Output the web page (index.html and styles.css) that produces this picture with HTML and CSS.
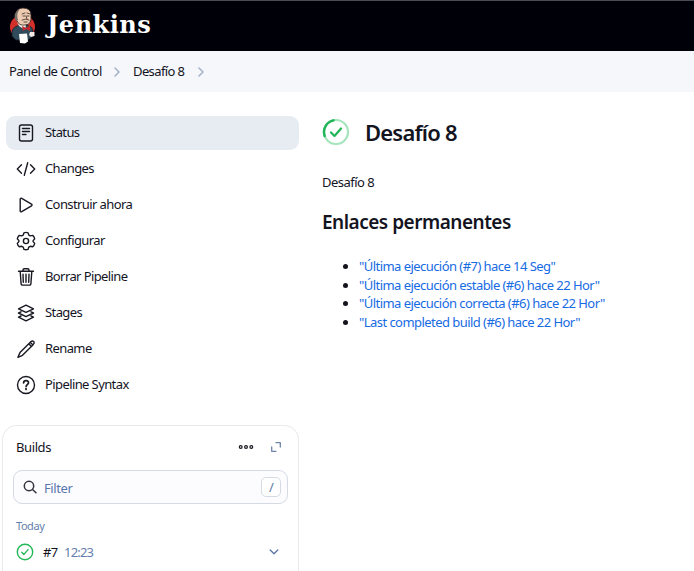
FILE: index.html
```html
<!DOCTYPE html>
<html lang="es">
<head>
<meta charset="utf-8">
<title>Desafío 8 - Jenkins</title>
<link rel="stylesheet" href="styles.css">
</head>
<body>
<header class="header">
  <svg class="butler" width="28" height="38" viewBox="0 0 28 38">
    <ellipse cx="13.500" cy="20" rx="12.500" ry="12" fill="#d3302b"/>
    <path d="M3 29 Q2 21 8 19 L13 17 L20 19 Q25 20 24 29 L19 33 L7 33Z" fill="#304b5b" stroke="#14212b" stroke-width=".8"/>
    <path d="M8 15 L17 18 L16 23 L10 19Z" fill="#f4eee8"/>
    <path d="M7 8 Q7 1 14 1 Q22 1 22 8 Q23 18 16 18 Q10 19 8 14Z" fill="#edcbb2" stroke="#30231f" stroke-width=".8"/>
    <path d="M7 14 Q4 9 7 5 Q9 2 11 2 Q7 6 9 13Z" fill="#756f68"/>
    <path d="M13 7l3-1m2 0l3 1M14 9h2m2 0h2M17 9l1 3M13 13q4-2 7 0M15 15h3" fill="none" stroke="#3b2924" stroke-width=".8"/>
    <path d="M13 19l4 2 4-3v6l-4-2-3 2z" fill="#c3252b"/>
    <path d="M10 27l8-.5 1 8-3 2-5-.5z" fill="#fff"/>
    <path d="M21 25h4.500v4l-3.500 1-2-2z" fill="#f2e9e4"/>
  </svg>
  <span class="brand">Jenkins</span>
</header>
<nav class="crumbs">
  <span class="crumb-root">Panel de Control</span>
  <svg class="chev" width="6" height="10" viewBox="0 0 6 10"><path d="M1 1l4 4-4 4"/></svg>
  <span class="crumb-job">Desafío 8</span>
  <svg class="chev" width="6" height="10" viewBox="0 0 6 10"><path d="M1 1l4 4-4 4"/></svg>
</nav>
<div class="page">
  <aside class="side">
    <ul class="tasks">
      <li class="task active"><svg class="ic" viewBox="0 0 20 20"><rect x="3.500" y="2" width="13" height="16" rx="2"/><path d="M6.500 5.500h7M6.500 8.500h7M6.500 11.500h3.500"/></svg><span>Status</span></li>
      <li class="task"><svg class="ic" viewBox="0 0 20 20"><path d="M5.500 5.800L1.300 10l4.200 4.200M14.500 5.800l4.200 4.200-4.200 4.200M11.700 3.800L8.300 16.200"/></svg><span>Changes</span></li>
      <li class="task"><svg class="ic" viewBox="0 0 20 20"><path d="M4.200 4.100v11.800c0 .8.800 1.200 1.500.8l9.800-5.900c.7-.4.700-1.200 0-1.600L5.700 3.300c-.7-.4-1.500 0-1.500.8z"/></svg><span>Construir ahora</span></li>
      <li class="task"><svg class="ic" viewBox="0 0 20 20"><path d="M8 1.800Q10 1 12 1.800l.8 2.300 1.500.8 2.400-.5Q18.300 5.800 18.700 7.800l-1.600 1.800v1l1.600 1.800Q18.300 14.400 16.700 15.800l-2.400-.5-1.500.8-.8 2.300Q10 19 8 18.400l-.8-2.300-1.500-.8-2.400.5Q1.700 14.400 1.300 12.400l1.600-1.800v-1L1.300 7.800Q1.700 5.800 3.300 4.400l2.400.5 1.500-.8z"/><circle cx="10" cy="10" r="2.600"/></svg><span>Configurar</span></li>
      <li class="task"><svg class="ic" viewBox="0 0 20 20"><path d="M2.500 4.300h15M4.200 4.500l.9 12.300c.1.800.6 1.300 1.400 1.300h7c.8 0 1.300-.5 1.400-1.300l.9-12.300M7 4V3c0-.7.500-1.200 1.200-1.200h3.600c.7 0 1.200.5 1.200 1.200v1M10 7.200v8M7 7.200l.3 8M13 7.200l-.3 8"/></svg><span>Borrar Pipeline</span></li>
      <li class="task"><svg class="ic" viewBox="0 0 20 20"><path d="M10 2.200l7.500 3.600L10 9.400 2.500 5.800zM5 8.800L2.500 10l7.500 3.600 7.500-3.600L15 8.800M5 13l-2.500 1.200 7.500 3.600 7.500-3.600L15 13"/></svg><span>Stages</span></li>
      <li class="task"><svg class="ic" viewBox="0 0 20 20"><path d="M14.300 3.300L4 13.600l-2.100 4.700 4.600-2L16.900 6M14.300 3.300l.7-.7c.8-.8 1.900-.8 2.600-.1s.7 1.800-.1 2.600l-.8.800zM12.800 4.800l2.600 2.600"/></svg><span>Rename</span></li>
      <li class="task"><svg class="ic" viewBox="0 0 20 20"><circle cx="10" cy="10" r="8.500"/><path class="bold" d="M7.600 7.900c.1-3.200 5.100-2.900 4.900 0-.1 1.500-2.400 1.900-2.400 3.500M10 13.600v.9"/></svg><span>Pipeline Syntax</span></li>
    </ul>
    <section class="builds">
      <div class="builds-head">
        <span class="builds-title">Builds</span>
        <svg class="dots" width="16" height="6" viewBox="0 0 16 6"><circle cx="2.700" cy="3" r="1.400"/><circle cx="8" cy="3" r="1.400"/><circle cx="13.300" cy="3" r="1.400"/></svg>
        <svg class="expand" width="10" height="10" viewBox="0 0 10 10"><path d="M5 .7h4.300V5M.7 5v4.300H5"/></svg>
      </div>
      <div class="filter">
        <svg class="search" width="14" height="14" viewBox="0 0 14 14"><circle cx="6" cy="6" r="4.700"/><path d="M9.500 9.500l3.500 3.300"/></svg>
        <span class="filter-text">Filter</span>
        <kbd class="key">/</kbd>
      </div>
      <div class="day">Today</div>
      <div class="build">
        <svg class="ok" width="18" height="18" viewBox="0 0 18 18"><circle cx="9" cy="9" r="7.700"/><path d="M5.800 9.300l2.100 2.100 4.200-4.800"/></svg>
        <span class="num">#7</span><span class="time">12:23</span>
        <svg class="down" width="10" height="6" viewBox="0 0 10 6"><path d="M1.200 1L5 4.700 8.800 1"/></svg>
      </div>
    </section>
  </aside>
  <main class="main">
    <div class="title-row">
      <svg width="28" height="28" viewBox="0 0 28 28" class="status"><circle cx="14" cy="14" r="12" class="ring"/><path class="arc" d="M2.700 18A12 12 0 0 1 11.500 2.300"/><path class="tick" d="M9 14.500l3.500 3.500 6.500-7.500"/></svg>
      <h1>Desafío 8</h1>
    </div>
    <p class="desc">Desafío 8</p>
    <h2>Enlaces permanentes</h2>
    <ul class="links">
      <li><a>"Última ejecución (#7) hace 14 Seg"</a></li>
      <li><a>"Última ejecución estable (#6) hace 22 Hor"</a></li>
      <li><a>"Última ejecución correcta (#6) hace 22 Hor"</a></li>
      <li><a>"Last completed build (#6) hace 22 Hor"</a></li>
    </ul>
  </main>
</div>
</body>
</html>
```
FILE: styles.css
```css
* { box-sizing: border-box; }
body { margin: 0; height: 571px; overflow: hidden; background: #fff; color: #14141f; font: 13px/18px "Noto Sans", "Open Sans", sans-serif; letter-spacing: -0.6px; }
svg { display: block; flex: none; fill: none; stroke-linecap: round; stroke-linejoin: round; }
ul { margin: 0; padding: 0; }
.header { height: 51px; background: #000009; border-top: 1px solid #4b4b50; display: flex; align-items: flex-start; padding: 6px 0 0 9px; }
.brand { margin: 3px 0 0 10px; color: #fff; font: bold 24px/30px "DejaVu Serif", serif; letter-spacing: 0.5px; }
.crumbs { height: 41px; background: #f5f7fa; display: flex; align-items: center; padding-left: 9px; }
.crumb-root { width: 105px; padding-bottom: 2px; letter-spacing: -0.52px; }
.crumb-job { width: 65px; margin-left: 13px; padding-bottom: 2px; }
.chev { stroke: #a4b1c9; stroke-width: 1.5; }
.page { display: flex; }
.side { width: 299px; padding-top: 24px; }
.tasks { list-style: none; margin-left: 6px; display: grid; gap: 2px; }
.task { height: 34px; display: flex; align-items: center; padding-left: 10px; gap: 9px; border-radius: 9px; }
.task span { padding-bottom: 2px; }
.active { background: #e7ecf3; }
.ic { width: 20px; height: 20px; stroke: #191923; stroke-width: 1.4; }
.bold { stroke-width: 1.7; }
.builds { margin: 23px 0 0 2px; height: 170px; border: 1px solid #e9e9ee; border-bottom: 0; border-radius: 15px 15px 0 0; padding: 12px 10px 0; }
.builds-head { height: 18px; display: flex; align-items: center; padding-left: 3px; }
.builds-title { width: 222px; letter-spacing: -0.4px; }
.dots { stroke: #191923; stroke-width: 1.2; }
.expand { margin-left: 17px; stroke: #7084aa; stroke-width: 1.3; }
.filter { margin-top: 14px; height: 34px; border: 1px solid #d5dae4; border-radius: 9px; background: #fcfcff; display: flex; align-items: center; padding: 0 6px 0 9px; }
.search { stroke: #33333d; stroke-width: 1.5; }
.filter-text { margin-left: 7px; padding-top: 2px; color: #5878ac; flex: 1; letter-spacing: -0.4px; }
.key { width: 20px; height: 20px; border: 1px solid #d5dae4; border-radius: 5px; display: flex; align-items: center; justify-content: center; background: #fff; color: #6079a6; font: 13px/18px "Noto Sans", sans-serif; }
.day { margin: 14px 0 0 3px; font-size: 11px; line-height: 16px; letter-spacing: -0.45px; color: #6680ae; }
.build { display: flex; align-items: center; padding: 0 9px 0 3px; margin-top: 9px; }
.ok { stroke: #25b85a; stroke-width: 1.4; }
.num { margin-left: 9px; width: 21px; }
.time { flex: 1; color: #6680ae; letter-spacing: -0.8px; }
.down { stroke: #6079a6; stroke-width: 1.4; }
.main { padding: 25px 0 0 23px; }
.title-row { display: flex; align-items: center; height: 30px; gap: 15px; }
.ring { stroke: #a5e5bd; stroke-width: 2.2; }
.arc { stroke: #20b557; stroke-width: 2.4; }
.tick { stroke: #20b557; stroke-width: 2.2; }
h1 { margin: 0; font-size: 22px; line-height: 30px; font-weight: 600; letter-spacing: -0.8px; }
.desc { margin: 26px 0 0; letter-spacing: -0.52px; }
h2 { margin: 17px 0 0; font-size: 19px; line-height: 28px; font-weight: 600; letter-spacing: -0.5px; }
.links { margin-top: 21px; padding-left: 37px; line-height: 18.600px; letter-spacing: -0.55px; }
.links li::marker { color: #14141f; }
.links a { color: #176be3; }
```
